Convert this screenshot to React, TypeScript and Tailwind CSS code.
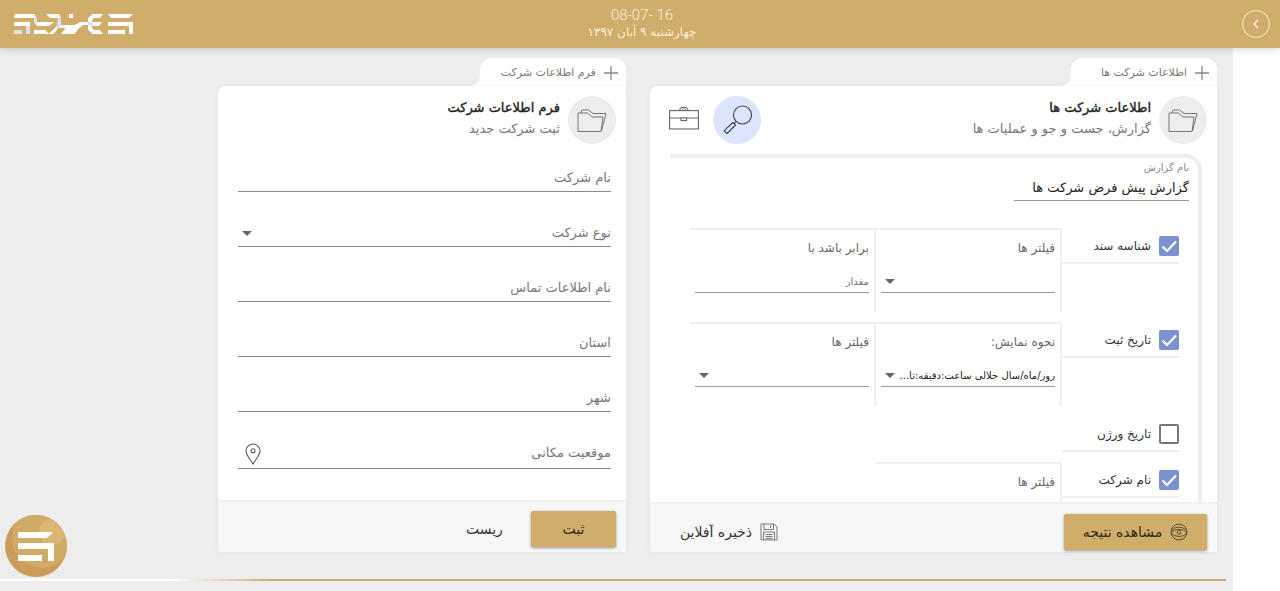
import React, { useState } from "react";

function FolderIcon() {
  return (
    <svg viewBox="0 0 30 26" className="h-[26px] w-[30px]" fill="none" stroke="#777" strokeWidth="1" strokeLinejoin="round">
      <path d="M1 24.500V6h9.500l4.500 4H26L24 24.500z" />
      <path d="M4 6l1-3h6.500l4.500 3.500H29L24.500 24" />
    </svg>
  );
}

function PlusIcon() {
  return (
    <svg viewBox="0 0 14 14" className="size-[14px] shrink-0" stroke="#888" strokeWidth="1.300">
      <path d="M7 0v14M0 7h14" />
    </svg>
  );
}

function SearchIcon() {
  return (
    <svg viewBox="0 0 30 30" className="size-[30px]" fill="none" stroke="#3d4354" strokeWidth="1.100">
      <circle cx="20.500" cy="10" r="9" />
      <path d="M14 16.500l-2 2.300" />
      <path d="M10.800 17.500l2.700 2.500-8.500 8.500-3-2.700z" strokeLinejoin="round" />
    </svg>
  );
}

function BriefcaseIcon() {
  return (
    <svg viewBox="0 0 30 24" className="h-6 w-[30px]" fill="none" stroke="#666" strokeWidth="1.100">
      <rect x="0.600" y="4.600" width="28.800" height="18.400" />
      <path d="M.6 12H12M17.500 12h12" />
      <rect x="12" y="11.800" width="5.500" height="2.800" />
      <path d="M10.500 4.600C11 .2 18.500 .2 19 4.600" />
      <path d="M12.300 4.600c.8-2.400 4.200-2.400 5 0" strokeWidth=".7" />
    </svg>
  );
}

function EyeIcon() {
  return (
    <svg viewBox="0 0 18 18" className="size-[18px]" fill="none" stroke="#4d412b" strokeWidth=".9">
      <circle cx="9" cy="9" r="8" />
      <path d="M1.200 10C4 5.300 14 5.300 16.800 10 14 14.500 4 14.500 1.200 10z" />
      <path d="M2 7.200c3-4 11-4 14 0" />
      <circle cx="9" cy="9.500" r="1.800" />
    </svg>
  );
}

function SaveIcon() {
  return (
    <svg viewBox="0 0 18 18" className="size-[18px]" fill="none" stroke="#666" strokeWidth=".9">
      <path d="M1 1h13l3 3v13H1z" />
      <path d="M4 1v5.500h9.500V1M10.500 2.500V5" />
      <path d="M3.500 17V9h11v8M5.500 11.500h7M5.500 13.500h7M5.500 15.500h7" />
    </svg>
  );
}

function PinIcon() {
  return (
    <svg viewBox="0 0 16 22" className="h-[22px] w-4" fill="none" stroke="#555" strokeWidth="1.100">
      <path d="M8 21C5.500 16.500 1 12.500 1 8a7 7 0 0 1 14 0c0 4.500-4.500 8.500-7 13z" />
      <circle cx="8" cy="7.800" r="2" />
    </svg>
  );
}

function BrandLogo() {
  return (
    <svg viewBox="0 0 120 20" className="h-5 w-[120px]" role="img" aria-label="لوگو">
      <g fill="#fff">
        <path d="M1 0H20L23 4H0zM0 8H16V20H12V12H0z" />
        <path d="M20 8H40L35 12H23zM20 16H31L35 20H20z" />
        <path d="M32 0H45L47 4H36zM43 12v4l-4 4h-5l5-4z" />
        <path d="M50 16H64L60 20H47zM55 0h4v4h-4zM46 11H61L66 8H77V11H69L63 16H50L52 14H44z" />
        <path d="M79 0H89L86 4H80L78 6V14L80 16H86L89 20H79L74 16V4zM78 8H88L85 12H78z" />
        <path d="M94 0H119L115 4H97zM94 8H119V20H115V12H94zM94 16H111V20H94z" />
      </g>
      <g fill="#dcdff2">
        <path d="M0 16H8V20H0zM12 12h4v8h-4zM20 0l3 4v6l-3-2zM44 2l3 3v6l-4 4v-5zM74 8h4v5l-4-2z" />
      </g>
    </svg>
  );
}

function BadgeLogo() {
  return (
    <svg viewBox="0 0 62 62" className="size-[62px]">
      <defs>
        <clipPath id="disc"><circle cx="31" cy="31" r="31" /></clipPath>
      </defs>
      <g clipPath="url(#disc)">
        <rect width="62" height="62" fill="#cb9c5c" />
        <circle cx="37" cy="23" r="30" fill="#d0ab66" />
        <circle cx="47" cy="17" r="13" fill="#dab873" />
      </g>
      <path fill="#fff" d="M13 17H48L42 23H13zM13 28H49V46H43V34H13zM13 40H37V46H13z" />
    </svg>
  );
}

function Caret() {
  return <span className="pointer-events-none absolute top-1/2 left-1 -mt-0.5 border-x-5 border-t-5 border-x-transparent border-t-[#666]" />;
}

function Panel({ tab, title, subtitle, tools, children, footer, className }: {
  tab: string; title: string; subtitle: string; tools?: React.ReactNode;
  children: React.ReactNode; footer: React.ReactNode; className: string;
}) {
  return (
    <section className={`flex flex-col ${className}`}>
      <div className="flex items-end">
        <div className="flex h-7 w-[146px] items-center gap-2 rounded-t-xl bg-white pt-0.5 pr-2">
          <PlusIcon />
          <span className="text-[11px] whitespace-nowrap text-[#777]">{tab}</span>
        </div>
        <div className="bg-white"><div className="size-2.5 rounded-br-[10px] bg-[#ededed]" /></div>
      </div>
      <div className="flex grow flex-col rounded-tl-lg bg-white shadow-[0_0_6px_rgba(0,0,0,0.04)]">
        <header className="flex items-center px-2.5 pt-2.5">
          <span className="ml-2 flex size-12 shrink-0 items-center justify-center rounded-full bg-[#ededed]"><FolderIcon /></span>
          <div className="grow pb-1">
            <h2 className="text-[13px] leading-[21px] text-[#222] [-webkit-text-stroke:0.4px_#222]">{title}</h2>
            <p className="text-[13px] leading-[21px] text-[#777]">{subtitle}</p>
          </div>
          {tools}
        </header>
        <div className="grow">{children}</div>
        <footer className="flex items-center border-t-2 border-[#eee] bg-[#f7f7f7] px-2.5">{footer}</footer>
      </div>
    </section>
  );
}

function CheckRow({ label, on, children }: { label: string; on: boolean; children?: React.ReactNode }) {
  const [checked, setChecked] = useState(on);
  return (
    <div className="grid grid-cols-[117px_1fr_1fr] items-start">
      <label className="flex h-9 items-center gap-2 border-b-2 border-[#eee] pt-0.5 text-[12px] text-[#333]">
        <span className="relative flex size-5 shrink-0">
          <input
            type="checkbox"
            checked={checked}
            onChange={(e) => setChecked(e.target.checked)}
            className="peer size-5 appearance-none rounded-xs border-2 border-[#777] bg-white checked:border-[#7b92cf] checked:bg-[#7b92cf]"
          />
          <svg viewBox="0 0 20 20" className="pointer-events-none absolute inset-0 hidden size-5 peer-checked:block" fill="none" stroke="#fff" strokeWidth="2.200">
            <path d="M3.500 10.500l4.500 4.500L17 5.500" />
          </svg>
        </span>
        {label}
      </label>
      {children}
    </div>
  );
}

function FilterCell({ label, kind, value = "" }: { label: string; kind: "select" | "input"; value?: string }) {
  return (
    <label className="flex h-[84px] min-w-0 flex-col border-t-2 border-r-2 border-[#eee] px-[5px] text-[12px] text-[#666]">
      <span className="pt-2 leading-5">{label}</span>
      <span className="relative mt-3 block border-b border-[#999]">
        {kind === "select" ? (
          <>
            <select className="block h-[22px] w-full appearance-none bg-transparent pl-4 text-[10px] text-[#222] outline-none">
              <option>{value}</option>
            </select>
            <Caret />
          </>
        ) : (
          <input placeholder="مقدار" className="block h-[22px] w-full bg-transparent text-[10px] outline-none placeholder:text-[#777]" />
        )}
      </span>
    </label>
  );
}

const fieldClass = "block h-[27px] w-full appearance-none bg-transparent text-[13px] text-[#777] outline-none placeholder:text-[#777]";

function TextField({ label }: { label: string }) {
  return (
    <div className="border-b border-[#888]">
      <input aria-label={label} placeholder={label} className={fieldClass} />
    </div>
  );
}

export default function App() {
  return (
    <div dir="rtl" className="flex min-h-screen flex-col bg-[#ededed] font-['DejaVu_Sans',sans-serif]">
      <div className="z-10 grid h-12 grid-cols-3 items-center bg-[#d0ad6a] pr-2.5 pl-3.5 shadow-[0_1px_8px_rgba(0,0,0,0.18)]">
        <button aria-label="بازگشت" className="flex size-7 items-center justify-center rounded-full border border-[#fff3dc]">
          <svg viewBox="0 0 10 10" className="size-2.5" fill="none" stroke="#fff3dc" strokeWidth="1.200"><path d="M7 1L3 5l4 4" /></svg>
        </button>
        <div className="text-center text-[#fbf0d9]">
          <div dir="ltr" className="font-['Roboto',sans-serif] text-[15px] leading-4 font-light">08-07- 16</div>
          <div className="text-[12px] leading-[18px]">چهارشنبه ۹ آبان ۱۳۹۷</div>
        </div>
        <div className="flex justify-end"><BrandLogo /></div>
      </div>

      <div className="flex grow">
        <aside className="w-[47px] shrink-0 bg-white" />
        <main className="flex min-w-0 grow flex-col pt-2.5">
          <div className="flex gap-6 pr-4">
            <Panel
              className="w-[46.6%]"
              tab="اطلاعات شرکت ها"
              title="اطلاعات شرکت ها"
              subtitle="گزارش، جست و جو و عملیات ها"
              tools={
                <div className="flex items-center">
                  <button aria-label="جست و جو" className="flex size-12 items-center justify-center rounded-full bg-[#dbe6fc]"><SearchIcon /></button>
                  <button aria-label="عملیات" className="flex h-12 w-[53px] items-center justify-center pr-1 pb-1"><BriefcaseIcon /></button>
                </div>
              }
              footer={
                <div className="flex h-12 grow items-center justify-between pt-2 pl-4">
                  <button className="flex h-9 w-[143px] items-center justify-center gap-2 rounded-xs bg-[#d0ad6a] text-[14px] text-[#332a18] shadow-[0_1px_3px_rgba(0,0,0,0.4)]"><EyeIcon />مشاهده نتیجه</button>
                  <button className="flex h-9 items-center gap-2 px-1 text-[14px] text-[#333]"><SaveIcon />ذخیره آفلاین</button>
                </div>
              }
            >
              <div className="mt-2.5 mr-[15px] ml-5 h-[348px] overflow-hidden rounded-tr-2xl border-t-4 border-r-4 border-[#eee] pt-1 pr-[9px]">
                <label className="block w-[175px] border-b border-[#999]">
                  <span className="block text-[10px] leading-3 text-[#888]">نام گزارش</span>
                  <input defaultValue="گزارش پیش فرض شرکت ها" className="block h-[26px] w-full bg-transparent text-[13px] text-[#222] outline-none" />
                </label>
                <div className="mt-[27px] mr-2.5 ml-5 flex flex-col gap-2.5">
                  <CheckRow label="شناسه سند" on>
                    <FilterCell label="فیلتر ها" kind="select" />
                    <FilterCell label="برابر باشد با" kind="input" />
                  </CheckRow>
                  <CheckRow label="تاریخ ثبت" on>
                    <FilterCell label="نحوه نمایش:" kind="select" value="روز/ماه/سال جلالی ساعت:دقیقه:ثا..." />
                    <FilterCell label="فیلتر ها" kind="select" />
                  </CheckRow>
                  <CheckRow label="تاریخ ورژن" on={false} />
                  <CheckRow label="نام شرکت" on>
                    <FilterCell label="فیلتر ها" kind="select" />
                  </CheckRow>
                </div>
              </div>
            </Panel>

            <Panel
              className="w-[33.5%]"
              tab="فرم اطلاعات شرکت"
              title="فرم اطلاعات شرکت"
              subtitle="ثبت شرکت جدید"
              footer={
                <div className="flex h-[50px] grow items-center gap-6 pt-1">
                  <button className="h-9 w-[85px] rounded-xs bg-[#d0ad6a] text-[14px] text-[#332a18] shadow-[0_1px_3px_rgba(0,0,0,0.4)]">ثبت</button>
                  <button className="h-9 px-1 text-[14px] text-[#333]">ریست</button>
                </div>
              }
            >
              <form className="flex flex-col gap-[27px] pt-5 pr-[15px] pl-5">
                <TextField label="نام شرکت" />
                <div className="relative border-b border-[#888]">
                  <select aria-label="نوع شرکت" className={fieldClass}><option>نوع شرکت</option></select>
                  <Caret />
                </div>
                <TextField label="نام اطلاعات تماس" />
                <TextField label="استان" />
                <TextField label="شهر" />
                <div className="flex items-start border-b border-[#888] pb-0.5 pl-[7px]">
                  <input aria-label="موقعیت مکانی" placeholder="موقعیت مکانی" className={fieldClass} />
                  <button type="button" aria-label="انتخاب مکان" className="pt-1"><PinIcon /></button>
                </div>
              </form>
            </Panel>
          </div>
          <div className="mt-[27px] mr-[7px] mb-2.5 h-0.5 bg-linear-to-r from-white from-14% via-[#d0ad6a] via-22% to-[#d0ad6a]" />
        </main>
      </div>
      <a href="#menu" aria-label="منو" className="fixed bottom-3.5 left-[5px] z-20"><BadgeLogo /></a>
    </div>
  );
}
